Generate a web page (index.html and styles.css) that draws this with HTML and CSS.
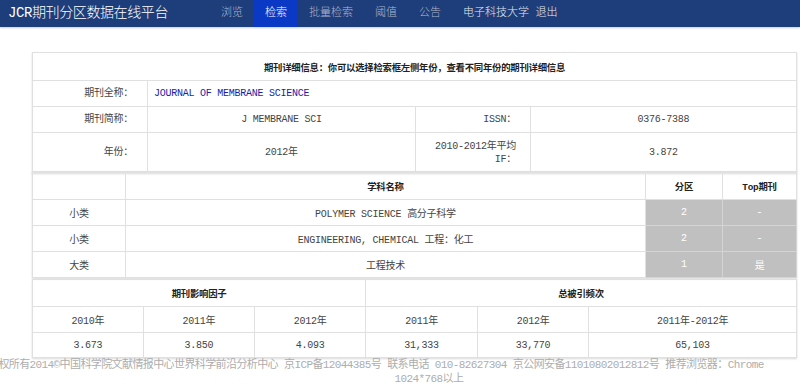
FILE: index.html
```html
<!DOCTYPE html>
<html>
    <head>
        <meta charset="utf-8">
        <title>JCR期刊分区数据在线平台</title>
        <link rel="stylesheet" href="styles.css">
    </head>
    <body>
        <div id="navigation">
            <div class="brand">JCR期刊分区数据在线平台</div>
            <a class="navItem">浏览</a>
            <a class="navItem active">检索</a>
            <a class="navItem">批量检索</a>
            <a class="navItem">阈值</a>
            <a class="navItem">公告</a>
            <a class="navItem user">电子科技大学 退出</a>
        </div>

        <div id="content">
            <!-- journal info -->
            <table class="grid info">
                <colgroup>
                    <col style="width:115px">
                    <col style="width:268px">
                    <col style="width:115px">
                    <col>
                </colgroup>
                <tr class="head">
                    <th colspan="4">期刊详细信息：你可以选择检索框左侧年份，查看不同年份的期刊详细信息</th>
                </tr>
                <tr>
                    <td class="label">期刊全称：</td>
                    <td colspan="3" class="fullName">JOURNAL OF MEMBRANE SCIENCE</td>
                </tr>
                <tr>
                    <td class="label">期刊简称：</td>
                    <td>J MEMBRANE SCI</td>
                    <td class="label">ISSN：</td>
                    <td>0376-7388</td>
                </tr>
                <tr class="tall">
                    <td class="label">年份：</td>
                    <td>2012年</td>
                    <td class="label">2010-2012年平均<br>IF：</td>
                    <td>3.872</td>
                </tr>
            </table>

            <!-- subjects -->
            <table class="grid subject">
                <colgroup>
                    <col style="width:93px">
                    <col style="width:520px">
                    <col style="width:77px">
                    <col>
                </colgroup>
                <tr class="head">
                    <th></th>
                    <th>学科名称</th>
                    <th>分区</th>
                    <th>Top期刊</th>
                </tr>
                <tr>
                    <td>小类</td>
                    <td>POLYMER SCIENCE 高分子科学</td>
                    <td class="zone">2</td>
                    <td class="zone">-</td>
                </tr>
                <tr>
                    <td>小类</td>
                    <td>ENGINEERING, CHEMICAL 工程：化工</td>
                    <td class="zone">2</td>
                    <td class="zone">-</td>
                </tr>
                <tr>
                    <td>大类</td>
                    <td>工程技术</td>
                    <td class="zone">1</td>
                    <td class="zone">是</td>
                </tr>
            </table>

            <!-- impact factor and citations -->
            <table class="grid impact">
                <colgroup>
                    <col style="width:111px">
                    <col style="width:111px">
                    <col style="width:111px">
                    <col style="width:112px">
                    <col style="width:111px">
                    <col>
                </colgroup>
                <tr class="head">
                    <th colspan="3">期刊影响因子</th>
                    <th colspan="3">总被引频次</th>
                </tr>
                <tr>
                    <td>2010年</td>
                    <td>2011年</td>
                    <td>2012年</td>
                    <td>2011年</td>
                    <td>2012年</td>
                    <td>2011年-2012年</td>
                </tr>
                <tr>
                    <td>3.673</td>
                    <td>3.850</td>
                    <td>4.093</td>
                    <td>31,333</td>
                    <td>33,770</td>
                    <td>65,103</td>
                </tr>
            </table>
        </div>

        <div id="footer">
            <p class="copy">版权所有2014©中国科学院文献情报中心世界科学前沿分析中心 京ICP备12044385号 联系电话 010-82627304 京公网安备11010802012812号 推荐浏览器：Chrome</p>
            <p class="res">1024*768以上</p>
        </div>
    </body>
</html>
```

FILE: styles.css
```css
body,html{
    margin:0px;
    padding:0px;
}
body{
    font-family:"Liberation Mono","Noto Sans CJK SC",monospace;
    color:#444;
    background:white;
    overflow:hidden;
}
#navigation{
    display:flex;
    align-items:stretch;
    height:27px;
    background:#1e3d7b;
    box-shadow:0px 1px 2px #c8ccd6;
}
#navigation .brand{
    width:202px;
    padding-left:8px;
    line-height:27px;
    font-size:14px;
    font-weight:300;
    letter-spacing:-0.4px;
    color:white;
}
#navigation .navItem{
    padding:0px 11px;
    line-height:27px;
    font-size:11px;
    font-weight:300;
    color:#aeb6c9;
}
#navigation .navItem.active{
    background:#0a39c6;
    color:white;
}
#navigation .navItem.user{
    color:#e6e9f0;
}
#content{
    width:765px;
    margin:25px 0px 0px 32px;
}
.grid{
    width:100%;
    table-layout:fixed;
    border-collapse:collapse;
    font-size:10px;
    letter-spacing:-0.25px;
    box-shadow:0px 1px 2px rgba(0,0,0,0.15);
}
.grid td,.grid th{
    border:1px solid #e0e0e0;
    padding:0px 6px;
    text-align:center;
    font-weight:normal;
}
.grid tr{
    height:26px;
}
.grid tr.head{
    height:28px;
}
.grid th{
    font-weight:bold;
    font-size:9.4px;
    color:#222;
}
.info td.label{
    text-align:right;
    padding-right:14px;
}
.info td.fullName{
    text-align:left;
    color:#1c1ca6;
}
.info tr.tall{
    height:40px;
}
.info td{
    line-height:13px;
}
.subject{
    margin-top:-2px;
}
.subject .zone{
    background:#c0c0c0;
    color:white;
    border-color:#d4d4d4;
}
.impact{
    margin-top:1px;
}
.impact tr.head{
    height:27px;
}
.impact tr:last-child{
    height:25px;
}
#footer{
    width:882px;
    margin-left:-12px;
    font-size:11px;
    letter-spacing:-0.6px;
    line-height:14px;
    color:#adadad;
    text-align:center;
}
#footer p{
    margin:0px;
}
#footer .copy{
    text-align:left;
    white-space:nowrap;
}
```
